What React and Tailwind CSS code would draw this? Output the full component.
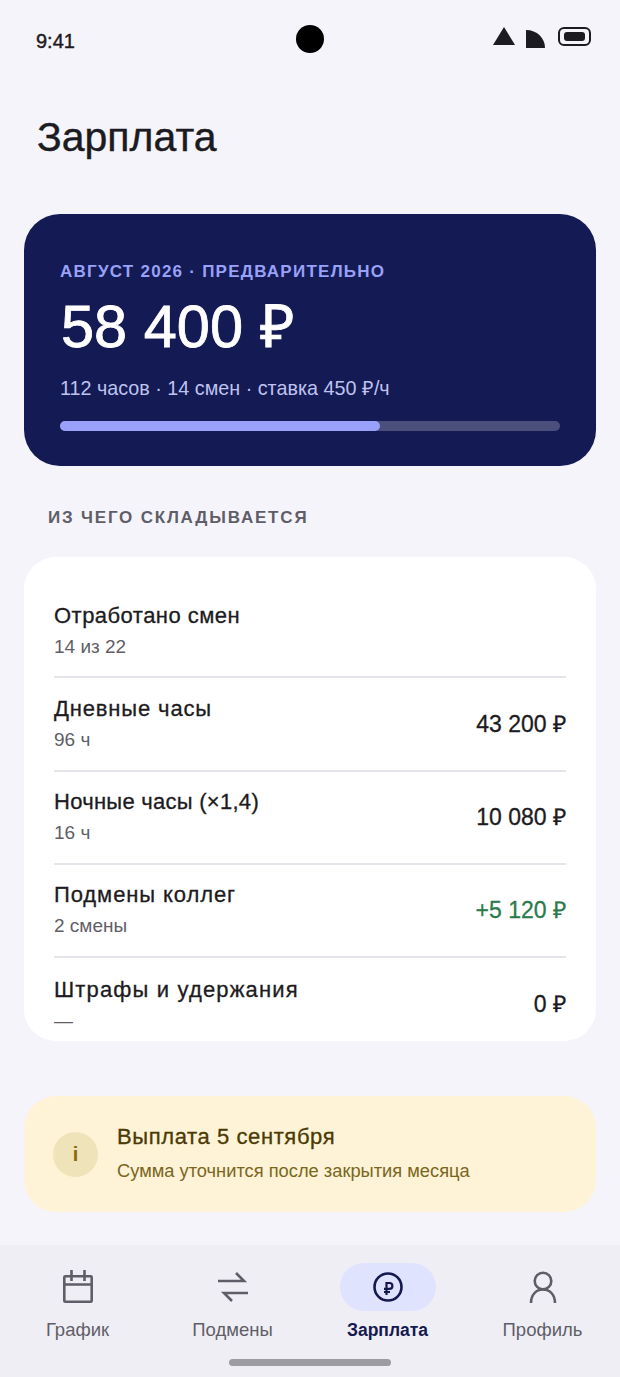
import React from 'react';

const rows = [
  { title: 'Отработано смен', sub: '14 из 22', track: 'tracking-[0.47px]' },
  { title: 'Дневные часы', sub: '96 ч', value: '43 200 ₽', track: 'tracking-[0.85px]' },
  { title: 'Ночные часы (×1,4)', sub: '16 ч', value: '10 080 ₽', track: 'tracking-[0.27px]' },
  { title: 'Подмены коллег', sub: '2 смены', value: '+5 120 ₽', green: true, track: 'tracking-[0.9px]' },
  { title: 'Штрафы и удержания', sub: '—', value: '0 ₽', last: true, track: 'tracking-[1.15px]' },
];

function CalendarIcon() {
  return (
    <svg width="32" height="34" viewBox="0 0 32 34" fill="none" stroke="#5f5e68" strokeWidth="2.6" className="-mt-[3px]">
      <rect x="2.3" y="7.3" width="27.4" height="25.4" rx="1" />
      <path d="M2.3 15.5h27.4M9.5 1v11M22.5 1v11" />
    </svg>
  );
}

function SwapIcon() {
  return (
    <svg width="30" height="30" viewBox="0 0 30 30" fill="none" stroke="#5f5e68" strokeWidth="2.6">
      <path d="M0 9h26L18 1M30 21H6l8 8" />
    </svg>
  );
}

function RubleIcon() {
  return (
    <svg width="30" height="30" viewBox="0 0 30 30" fill="none" stroke="#14194f" strokeWidth="2.6">
      <circle cx="15" cy="15" r="13.5" />
      <path d="M13.5 23V11h3a2.9 2.9 0 0 1 0 5.8H11M11 20h6" strokeWidth="2.2" />
    </svg>
  );
}

function PersonIcon() {
  return (
    <svg width="28" height="32" viewBox="0 0 28 32" fill="none" stroke="#5f5e68" strokeWidth="2.6">
      <circle cx="14" cy="10" r="8.3" />
      <path d="M2 32c0-8 5-13.5 12-13.5S26 24 26 32" />
    </svg>
  );
}

function NavItem({ icon, label, active }) {
  return (
    <div className="flex w-[155px] flex-col items-center">
      <div className={`flex h-12 w-24 items-center justify-center rounded-full ${active ? 'bg-[#e0e3fd]' : ''}`}>
        {icon}
      </div>
      <div className={`mt-[7px] leading-6 ${active ? 'text-[17.5px] font-bold text-[#14194f]' : 'text-[18.5px] text-[#5f5e68]'}`}>
        {label}
      </div>
    </div>
  );
}

export default function App() {
  return (
    <div className="flex h-[1377px] w-[620px] flex-col overflow-hidden bg-[#f6f4fb] font-['Liberation_Sans',sans-serif] text-[#1c1b21]">
      {/* Status bar */}
      <div className="relative flex h-[80px] justify-between pl-9 pr-[29px]">
        <span className="mt-[29px] text-[20px] leading-6 [-webkit-text-stroke:0.4px]">9:41</span>
        <div className="absolute left-[296px] top-[25px] h-[28px] w-[28px] rounded-full bg-black" />
        <div className="mt-[27px] flex items-start gap-[11px]">
          <svg width="22" height="18" viewBox="0 0 22 18"><path d="M11 0 22 18H0Z" fill="#1c1b21" /></svg>
          <svg width="19" height="18" viewBox="0 0 19 18" className="mt-[3px]"><path d="M0 0c11 0 19 8 19 18H0Z" fill="#1c1b21" /></svg>
          <div className="ml-[2px] flex h-[19px] w-[33px] items-center justify-center rounded-[6px] border-2 border-[#1c1b21]">
            <div className="h-[9px] w-[21px] rounded-[3px] bg-[#1c1b21]" />
          </div>
        </div>
      </div>

      {/* Title */}
      <h1 className="mt-[33px] pl-[37px] text-[41px] font-normal leading-12 [-webkit-text-stroke:0.4px]">Зарплата</h1>

      {/* Summary */}
      <div className="mx-6 mt-[53px] h-[252px] rounded-[36px] bg-[#141a54] px-9 pt-12">
        <div className="text-[17px] font-bold leading-[20px] tracking-[1.25px] text-[#99a1f8]">АВГУСТ 2026 · ПРЕДВАРИТЕЛЬНО</div>
        <div className="mt-[9px] pl-[1px] text-[59.5px] leading-[72px] text-white [-webkit-text-stroke:0.8px]">58 400 ₽</div>
        <div className="mt-[13px] text-[19.75px] leading-6 text-[#bfc3f0]">112 часов · 14 смен · ставка 450 ₽/ч</div>
        <div className="mt-[21px] h-[10px] w-full rounded-full bg-[#4a4f7c]">
          <div className="h-full w-[64%] rounded-full bg-[#99a1fb]" />
        </div>
      </div>

      <div className="mt-[42px] pl-12 text-[17px] font-bold leading-5 tracking-[1.8px] text-[#5f5e68]">ИЗ ЧЕГО СКЛАДЫВАЕТСЯ</div>

      {/* Breakdown */}
      <div className="mx-6 mt-[29px] h-[484px] overflow-hidden rounded-[32px] bg-white px-[30px] pt-[28px]">
        {rows.map((r) => (
          <div key={r.title} className={`flex h-[93.25px] items-center justify-between ${r.last ? '' : 'border-b-2 border-[#e5e4ea]'}`}>
            <div className="-mt-[1px]">
              <div className={`text-[22px] leading-7 text-[#1c1b21] [-webkit-text-stroke:0.3px] ${r.track}`}>{r.title}</div>
              <div className="mt-[5px] text-[19px] leading-6 text-[#5f5e68]">{r.sub}</div>
            </div>
            {r.value && (
              <div className={`text-[23px] [-webkit-text-stroke:0.3px] ${r.green ? 'text-[#2b7a4b]' : 'text-[#1c1b21]'}`}>{r.value}</div>
            )}
          </div>
        ))}
      </div>

      {/* Payout note */}
      <div className="mx-6 mt-[55px] flex h-[116px] items-center gap-[19px] rounded-[32px] bg-[#fef3d6] pl-[29px]">
        <div className="flex h-[45px] w-[45px] items-center justify-center rounded-full bg-[#efe3b9] text-[20px] font-bold text-[#8c6a0a]">i</div>
        <div className="-mt-[3px]">
          <div className="text-[22px] leading-7 tracking-[0.6px] text-[#4a3a05] [-webkit-text-stroke:0.3px]">Выплата 5 сентября</div>
          <div className="mt-[8px] text-[18.3px] leading-6 text-[#7a6620]">Сумма уточнится после закрытия месяца</div>
        </div>
      </div>

      {/* Bottom nav */}
      <div className="relative mt-auto flex h-[132px] bg-[#f0eef5] pt-[18px]">
        <NavItem icon={<CalendarIcon />} label="График" />
        <NavItem icon={<SwapIcon />} label="Подмены" />
        <NavItem icon={<RubleIcon />} label="Зарплата" active />
        <NavItem icon={<PersonIcon />} label="Профиль" />
        <div className="absolute bottom-[11px] left-[229px] h-[7px] w-[162px] rounded-full bg-[#9d9ca2]" />
      </div>
    </div>
  );
}
